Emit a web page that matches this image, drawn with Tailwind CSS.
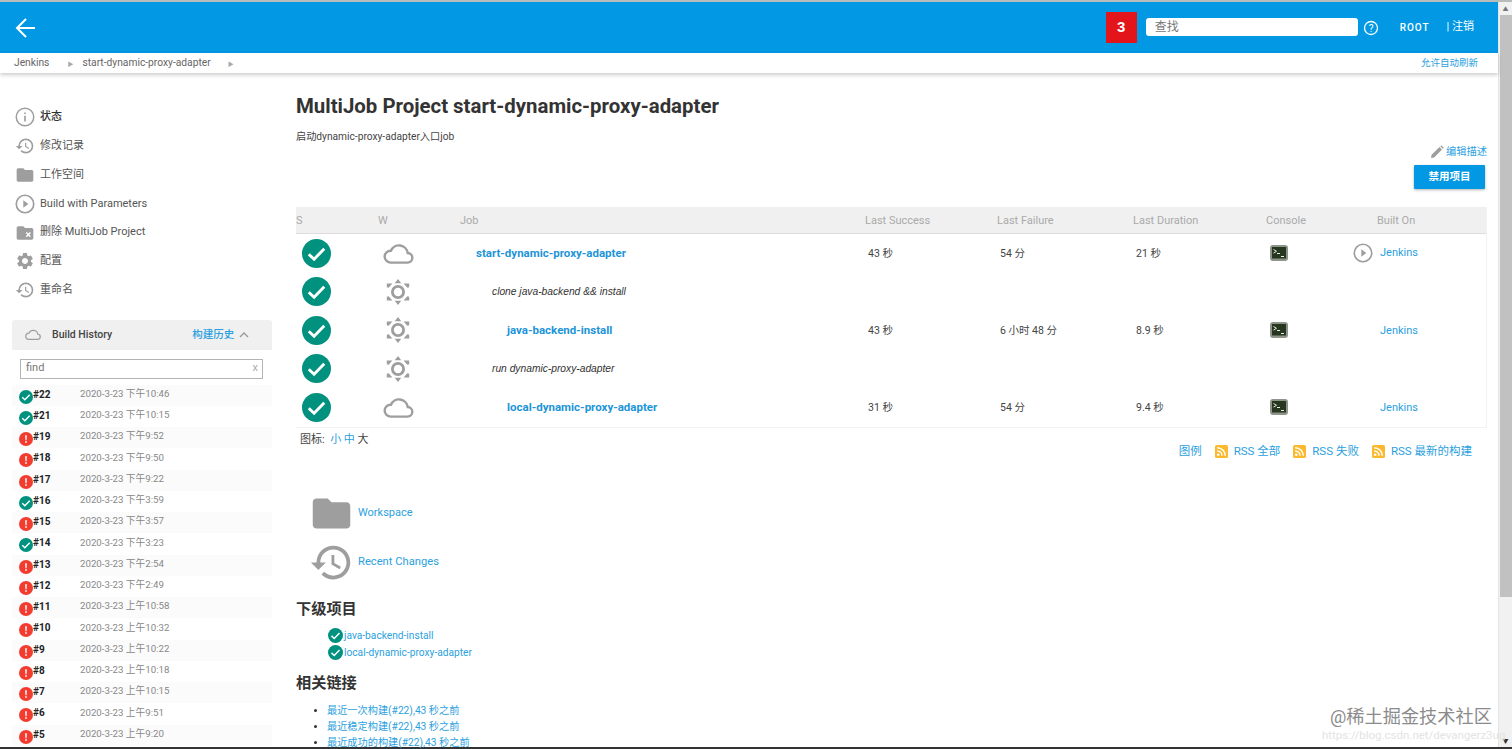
<!DOCTYPE html>
<html lang="zh-CN">
<head>
  <meta charset="UTF-8">
  <title>start-dynamic-proxy-adapter [Jenkins]</title>
  <script src="https://cdn.jsdelivr.net/npm/@tailwindcss/browser@4"></script>
</head>
<body class="bg-white overflow-hidden font-['Roboto','Noto_Sans_CJK_SC',sans-serif] text-[#444]">

<svg class="hidden">
  <symbol id="i-ok" viewBox="0 0 24 24"><circle cx="12" cy="12" r="12" fill="#00917f"/><path d="M5.600 12.600l4.400 4.200 8.400-8.800" fill="none" stroke="#fff" stroke-width="2.400"/></symbol>
  <symbol id="i-err" viewBox="0 0 24 24"><circle cx="12" cy="12" r="12" fill="#f23c30"/><path d="M10.600 5.500h2.800l-.4 8.500h-2zM10.600 15.800h2.800v2.800h-2.800z" fill="#fff"/></symbol>
  <symbol id="i-cloud" viewBox="0 0 32 22"><path d="M8 20.500h17.500a5 5 0 0 0 5-5 5 5 0 0 0-4.800-5 9.200 9.200 0 0 0-17.600-2.300A6.200 6.200 0 0 0 1.500 14.500c0 3.400 3 6 6.500 6z" fill="none" stroke="#9e9e9e" stroke-width="2.500"/></symbol>
  <symbol id="i-sun" viewBox="0 0 26 30"><circle cx="13" cy="15" r="6" fill="none" stroke="#9e9e9e" stroke-width="3"/><path d="M13 1l3.500 4.500h-7zM13 29l3.500-4.500h-7zM1 6h6l-4 4.500-2-.5zM25 6h-6l4 4.500 2-.5zM1 24h6l-4-4.500-2 .5zM25 24h-6l4-4.500 2 .5z" fill="#9e9e9e"/></symbol>
  <symbol id="i-history" viewBox="0 0 24 24"><path d="M13 3a9 9 0 0 0-9 9H1l3.890 3.890.07.14L9 12H6c0-3.870 3.130-7 7-7s7 3.130 7 7-3.130 7-7 7c-1.930 0-3.680-.79-4.940-2.060l-1.420 1.420A8.954 8.954 0 0 0 13 21a9 9 0 0 0 0-18zm-1 5v5l4.280 2.540.72-1.210-3.500-2.080V8H12z" fill="#9e9e9e"/></symbol>
  <symbol id="i-folder" viewBox="0 0 24 24"><path d="M10 4H4c-1.100 0-2 .9-2 2v12c0 1.100.9 2 2 2h16c1.100 0 2-.9 2-2V8c0-1.100-.9-2-2-2h-8l-2-2z" fill="#9e9e9e"/></symbol>
  <symbol id="i-play" viewBox="0 0 24 24"><circle cx="12" cy="12" r="10.500" fill="none" stroke="#9e9e9e" stroke-width="2"/><path d="M10 7.500l6 4.500-6 4.500z" fill="#9e9e9e"/></symbol>
  <symbol id="i-console" viewBox="0 0 18 16"><rect width="18" height="16" rx="3" fill="#8d9489"/><rect x="2" y="2" width="14" height="11.500" fill="#26361f"/><path d="M3.500 4.500l3 1.800-3 1.800M7 8.500h3M11 11.500h3" fill="none" stroke="#e8f0e0" stroke-width="1"/></symbol>
  <symbol id="i-rss" viewBox="0 0 12 12"><rect width="12" height="12" rx="1.500" fill="#fdb92d"/><circle cx="3" cy="9" r="1.200" fill="#fff"/><path d="M2 5.500a4.500 4.500 0 0 1 4.500 4.500M2 2.500a7.500 7.500 0 0 1 7.500 7.500" fill="none" stroke="#fff" stroke-width="1.400"/></symbol>
</svg>

<div class="flex h-[749px] flex-col border-t-2 border-b-2 border-t-[#b9bdb9] border-b-[#333]">
  <div class="flex min-h-0 flex-1">
    <div class="flex min-w-0 flex-1 flex-col">

      <!-- header -->
      <header class="flex h-[51px] shrink-0 items-center bg-[#0398e3] text-white">
        <svg class="ml-[15px] h-[22px] w-[22px]" viewBox="0 0 22 22"><path d="M20 11H2M11 2l-9 9 9 9" fill="none" stroke="#fff" stroke-width="2"/></svg>
        <div class="ml-auto flex h-[31px] w-[31px] items-center justify-center bg-[#e3151b] text-[15px] font-bold font-['Liberation_Sans']">3</div>
        <div class="ml-[9px] -mt-[1px] flex h-[18px] w-[212px] items-center rounded-[3px] bg-white pl-[9px] text-[12px] text-[#777]">查找</div>
        <svg class="ml-[5px] h-[16px] w-[16px]" viewBox="0 0 16 16"><circle cx="8" cy="8" r="6.500" fill="none" stroke="#fff" stroke-width="1.300"/><text x="8" y="11.500" text-anchor="middle" font-size="10" fill="#fff">?</text></svg>
        <span class="ml-[21px] text-[10px] font-medium tracking-[1px]">ROOT</span>
        <span class="ml-[17px] text-[11px]">| 注销</span>
        <span class="w-[24px]"></span>
      </header>

      <!-- breadcrumb -->
      <nav class="relative z-10 flex h-[20px] shrink-0 items-center bg-white pl-[14px] pr-[20px] text-[10.250px] text-[#666] shadow-[0_2px_4px_rgba(0,0,0,0.2)]">
        <span>Jenkins</span>
        <span class="ml-[18px] text-[6px] text-[#aaa]">▶</span>
        <span class="ml-[9px]">start-dynamic-proxy-adapter</span>
        <span class="ml-[17px] text-[6px] text-[#aaa]">▶</span>
        <a class="ml-auto text-[9.500px] text-[#2b9fe0]">允许自动刷新</a>
      </nav>

      <div class="flex min-h-0 flex-1">
        <!-- side panel -->
        <aside class="flex w-[296px] shrink-0 flex-col pl-[12px]">
          <ul class="mt-[30px] text-[11px] text-[#555]">
            <li class="flex h-[28.800px] items-center gap-[5px] pl-[3px]"><svg class="h-[20px] w-[20px]" viewBox="0 0 24 24"><circle cx="12" cy="12" r="10.500" fill="none" stroke="#9e9e9e" stroke-width="1.800"/><path d="M11 10.500h2v7h-2zM11 6.500h2v2h-2z" fill="#9e9e9e"/></svg><span class="font-medium text-[#333]">状态</span></li>
            <li class="flex h-[28.800px] items-center gap-[5px] pl-[3px]"><svg class="h-[20px] w-[20px]"><use href="#i-history"/></svg>修改记录</li>
            <li class="flex h-[28.800px] items-center gap-[5px] pl-[3px]"><svg class="h-[20px] w-[20px]"><use href="#i-folder"/></svg>工作空间</li>
            <li class="flex h-[28.800px] items-center gap-[5px] pl-[3px]"><svg class="h-[20px] w-[20px]"><use href="#i-play"/></svg>Build with Parameters</li>
            <li class="flex h-[28.800px] items-center gap-[5px] pl-[3px]"><svg class="h-[20px] w-[20px]" viewBox="0 0 24 24"><path d="M10 4H4c-1.100 0-2 .9-2 2v12c0 1.100.9 2 2 2h16c1.100 0 2-.9 2-2V8c0-1.100-.9-2-2-2h-8l-2-2z" fill="#9e9e9e"/><path d="M13.500 11.500l5 5M18.500 11.500l-5 5" stroke="#fff" stroke-width="1.800"/></svg>删除 MultiJob Project</li>
            <li class="flex h-[28.800px] items-center gap-[5px] pl-[3px]"><svg class="h-[20px] w-[20px]" viewBox="0 0 24 24"><path d="M19.140 12.940c.04-.3.06-.61.06-.94 0-.32-.02-.64-.07-.94l2.030-1.580a.49.49 0 0 0 .12-.61l-1.920-3.320a.488.488 0 0 0-.59-.22l-2.390.96c-.5-.38-1.030-.7-1.620-.94l-.36-2.540a.484.484 0 0 0-.48-.41h-3.840c-.24 0-.43.17-.47.41l-.36 2.540c-.59.24-1.130.57-1.620.94l-2.390-.96c-.22-.08-.47 0-.59.22L2.740 8.870c-.12.21-.08.47.12.61l2.030 1.580c-.05.3-.09.63-.09.94s.02.64.07.94l-2.030 1.580a.49.49 0 0 0-.12.61l1.920 3.320c.12.22.37.29.59.22l2.390-.96c.5.38 1.030.7 1.620.94l.36 2.540c.05.24.24.41.48.41h3.840c.24 0 .44-.17.47-.41l.36-2.540c.59-.24 1.130-.56 1.620-.94l2.390.96c.22.08.47 0 .59-.22l1.920-3.320c.12-.22.07-.47-.12-.61l-2.010-1.580zM12 15.600c-1.980 0-3.600-1.620-3.600-3.600s1.620-3.600 3.600-3.600 3.600 1.620 3.600 3.600-1.620 3.600-3.600 3.600z" fill="#9e9e9e"/></svg>配置</li>
            <li class="flex h-[28.800px] items-center gap-[5px] pl-[3px]"><svg class="h-[20px] w-[20px]"><use href="#i-history"/></svg>重命名</li>
          </ul>

          <!-- build history -->
          <section class="mt-[15px] w-[260px] min-h-0 flex-1 overflow-hidden">
            <div class="flex h-[30px] items-center rounded-t-[3px] bg-[#f0f0f0] pl-[13px] text-[10.500px] font-medium text-[#444]">
              <svg class="h-[11px] w-[16px]"><use href="#i-cloud"/></svg>
              <span class="ml-[11px]">Build History</span>
              <span class="ml-[80px] text-[10.500px] text-[#2b9fe0]">构建历史</span>
              <svg class="ml-[5px] h-[8px] w-[10px]" viewBox="0 0 10 8"><path d="M1 6l4-4 4 4" fill="none" stroke="#999" stroke-width="1.300"/></svg>
            </div>
            <div class="ml-[8px] mt-[9px] flex h-[20px] w-[243px] items-center justify-between border border-[#b4b4b4] pl-[5px] pr-[4px] text-[11px] text-[#777]"><span>find</span><span class="text-[#aaa]">x</span></div>
            <div id="builds" class="mt-[6px]"></div>
          </section>
        </aside>

        <!-- main panel -->
        <main class="min-w-0 flex-1 pr-[11px]">
          <h1 class="mt-[19px] text-[20.400px] leading-[28px] font-bold text-[#333]">MultiJob Project start-dynamic-proxy-adapter</h1>
          <p class="mt-[9px] text-[10.200px] leading-[15px] text-[#444]">启动dynamic-proxy-adapter入口job</p>
          <div class="mt-[1px] flex items-center justify-end text-[10.250px] leading-[14px] text-[#2b9fe0]">
            <svg class="mr-[2px] h-[14px] w-[14px]" viewBox="0 0 14 14"><path d="M1 13l.6-3.200L9.500 2l2.500 2.500-7.800 7.900zM10.300 1.200l1-1 2.500 2.500-1 1z" fill="#9e9e9e"/></svg>编辑描述
          </div>
          <div class="mt-[6px] flex justify-end pr-[2px]">
            <button class="h-[24px] w-[71px] rounded-[1px] bg-[#0398e3] text-[10.500px] font-bold text-white shadow-[0_1px_3px_rgba(0,0,0,0.3)]">禁用项目</button>
          </div>

          <!-- job table -->
          <div class="mt-[18px] border-r border-b border-[#f2f2f2]">
            <div class="grid h-[27px] grid-cols-[82px_82px_405px_132px_136px_133px_85px_1fr] items-center border-b border-[#ddd] bg-[#f0f0f0] pt-[2px] text-[11px] text-[#aaa]">
              <span>S</span><span>W</span><span>Job</span><span>Last Success</span><span>Last Failure</span><span>Last Duration</span><span>Console</span><span class="pl-[26px]">Built On</span>
            </div>
            <div class="grid h-[38.500px] grid-cols-[82px_82px_405px_132px_136px_133px_85px_1fr] items-center text-[10.500px]">
              <svg class="ml-[6px] h-[29px] w-[29px]"><use href="#i-ok"/></svg>
              <svg class="ml-[5px] h-[21px] w-[31px]"><use href="#i-cloud"/></svg>
              <a class="mt-[1px] pl-[16px] text-[11.500px] font-bold text-[#1d95d8]">start-dynamic-proxy-adapter</a>
              <span class="mt-[1px] pl-[3px]">43 秒</span><span class="mt-[1px] pl-[3px]">54 分</span><span class="mt-[1px] pl-[3px]">21 秒</span>
              <svg class="ml-[4px] h-[16px] w-[18px]"><use href="#i-console"/></svg>
              <span class="flex items-center gap-[7px] pl-[2px] text-[11px] text-[#2b9fe0]"><svg class="h-[20px] w-[20px]"><use href="#i-play"/></svg><span>Jenkins</span></span>
            </div>
            <div class="grid h-[38.500px] grid-cols-[82px_82px_405px_132px_136px_133px_85px_1fr] items-center text-[10.500px]">
              <svg class="ml-[6px] h-[29px] w-[29px]"><use href="#i-ok"/></svg>
              <svg class="ml-[7px] h-[28px] w-[26px]"><use href="#i-sun"/></svg>
              <span class="col-span-6 pl-[32px] font-['Liberation_Sans'] text-[10.250px] italic text-[#333]">clone java-backend &amp;&amp; install</span>
            </div>
            <div class="grid h-[38.500px] grid-cols-[82px_82px_405px_132px_136px_133px_85px_1fr] items-center text-[10.500px]">
              <svg class="ml-[6px] h-[29px] w-[29px]"><use href="#i-ok"/></svg>
              <svg class="ml-[7px] h-[28px] w-[26px]"><use href="#i-sun"/></svg>
              <a class="mt-[1px] pl-[47px] text-[11.500px] font-bold text-[#1d95d8]">java-backend-install</a>
              <span class="mt-[1px] pl-[3px]">43 秒</span><span class="mt-[1px] pl-[3px]">6 小时 48 分</span><span class="mt-[1px] pl-[3px]">8.9 秒</span>
              <svg class="ml-[4px] h-[16px] w-[18px]"><use href="#i-console"/></svg>
              <span class="mt-[1px] pl-[29px] text-[11px] text-[#2b9fe0]">Jenkins</span>
            </div>
            <div class="grid h-[38.500px] grid-cols-[82px_82px_405px_132px_136px_133px_85px_1fr] items-center text-[10.500px]">
              <svg class="ml-[6px] h-[29px] w-[29px]"><use href="#i-ok"/></svg>
              <svg class="ml-[7px] h-[28px] w-[26px]"><use href="#i-sun"/></svg>
              <span class="col-span-6 pl-[32px] font-['Liberation_Sans'] text-[10.250px] italic text-[#333]">run dynamic-proxy-adapter</span>
            </div>
            <div class="grid h-[38.500px] grid-cols-[82px_82px_405px_132px_136px_133px_85px_1fr] items-center text-[10.500px]">
              <svg class="ml-[6px] h-[29px] w-[29px]"><use href="#i-ok"/></svg>
              <svg class="ml-[5px] h-[21px] w-[31px]"><use href="#i-cloud"/></svg>
              <a class="mt-[1px] pl-[47px] text-[11.500px] font-bold text-[#1d95d8]">local-dynamic-proxy-adapter</a>
              <span class="mt-[1px] pl-[3px]">31 秒</span><span class="mt-[1px] pl-[3px]">54 分</span><span class="mt-[1px] pl-[3px]">9.4 秒</span>
              <svg class="ml-[4px] h-[16px] w-[18px]"><use href="#i-console"/></svg>
              <span class="mt-[1px] pl-[29px] text-[11px] text-[#2b9fe0]">Jenkins</span>
            </div>
          </div>

          <div class="flex items-start pt-[4px] text-[11px]">
            <span class="pl-[4px]">图标: &nbsp;<a class="text-[#2b9fe0]">小 中</a> 大</span>
            <div class="ml-auto mt-[11px] flex items-center pr-[15px] text-[11.500px] text-[#2b9fe0]">
              <span>图例</span>
              <svg class="ml-[13px] h-[13px] w-[13px]"><use href="#i-rss"/></svg><span class="ml-[6px]">RSS 全部</span>
              <svg class="ml-[13px] h-[13px] w-[13px]"><use href="#i-rss"/></svg><span class="ml-[6px]">RSS 失败</span>
              <svg class="ml-[13px] h-[13px] w-[13px]"><use href="#i-rss"/></svg><span class="ml-[6px]">RSS 最新的构建</span>
            </div>
          </div>

          <div class="mt-[29px] flex h-[49px] items-center gap-[4px] pl-[13px] text-[11px] text-[#2b9fe0]"><svg class="h-[45px] w-[45px]"><use href="#i-folder"/></svg>Workspace</div>
          <div class="flex h-[49px] items-center gap-[4px] pl-[13px] text-[11.200px] text-[#2b9fe0]"><svg class="h-[45px] w-[45px]"><use href="#i-history"/></svg>Recent Changes</div>

          <h2 class="mt-[10px] text-[15.200px] leading-[24px] font-bold text-[#333]">下级项目</h2>
          <ul class="mt-[6px] pl-[32px] text-[10.200px] text-[#2b9fe0]">
            <li class="flex h-[17px] items-center gap-[1px]"><svg class="h-[15px] w-[15px]"><use href="#i-ok"/></svg>java-backend-install</li>
            <li class="flex h-[17px] items-center gap-[1px]"><svg class="h-[15px] w-[15px]"><use href="#i-ok"/></svg>local-dynamic-proxy-adapter</li>
          </ul>
          <h2 class="mt-[10px] text-[15.200px] leading-[24px] font-bold text-[#333]">相关链接</h2>
          <ul class="ml-[31px] mt-[8px] list-disc text-[10.200px] leading-[16px] text-[#2b9fe0] marker:text-[#333]">
            <li>最近一次构建(#22),43 秒之前</li>
            <li>最近稳定构建(#22),43 秒之前</li>
            <li>最近成功的构建(#22),43 秒之前</li>
          </ul>
        </main>
      </div>
    </div>

    <!-- scrollbar -->
    <div class="flex w-[14px] shrink-0 flex-col border-l border-[#e4e4e4] bg-[#f1f1f1]">
      <div class="flex h-[13px] items-center justify-center text-[6px] text-[#777]">▲</div>
      <div class="ml-[1px] h-[582px] bg-[#c1c1c1]"></div>
      <div class="mt-auto flex h-[13px] items-center justify-center text-[6px] text-[#333]">▼</div>
    </div>
  </div>
</div>

<!-- watermark -->
<div class="absolute left-[1330px] top-[707px] text-[18.200px] leading-[20px] text-[#8b8b8b]">@稀土掘金技术社区</div>
<div class="absolute left-[1322px] top-[729px] text-[11.500px] leading-[13px] text-[#e3e3e3]">https://blog.csdn.net/devangerz3ug</div>

<script>
const builds = [
  ['ok', '#22', '2020-3-23 下午10:46'], ['ok', '#21', '2020-3-23 下午10:15'],
  ['err', '#19', '2020-3-23 下午9:52'], ['err', '#18', '2020-3-23 下午9:50'],
  ['err', '#17', '2020-3-23 下午9:22'], ['ok', '#16', '2020-3-23 下午3:59'],
  ['err', '#15', '2020-3-23 下午3:57'], ['ok', '#14', '2020-3-23 下午3:23'],
  ['err', '#13', '2020-3-23 下午2:54'], ['err', '#12', '2020-3-23 下午2:49'],
  ['err', '#11', '2020-3-23 上午10:58'], ['err', '#10', '2020-3-23 上午10:32'],
  ['err', '#9', '2020-3-23 上午10:22'], ['err', '#8', '2020-3-23 上午10:18'],
  ['err', '#7', '2020-3-23 上午10:15'], ['err', '#6', '2020-3-23 上午9:51'],
  ['err', '#5', '2020-3-23 上午9:20']
];
document.getElementById('builds').innerHTML = builds.map((b, i) => `
  <div class="flex h-[21.250px] items-center pl-[7px] text-[9.700px] ${i % 2 ? 'bg-white' : 'bg-[#fbfbfb]'}">
    <svg class="mt-[3px] h-[14px] w-[14px] shrink-0"><use href="#i-${b[0]}"/></svg>
    <span class="-mt-[2px] w-[47px] text-[10px] font-bold text-[#222]">${b[1]}</span>
    <span class="-mt-[2px] text-[#888]">${b[2]}</span>
  </div>`).join('');
</script>
</body>
</html>
